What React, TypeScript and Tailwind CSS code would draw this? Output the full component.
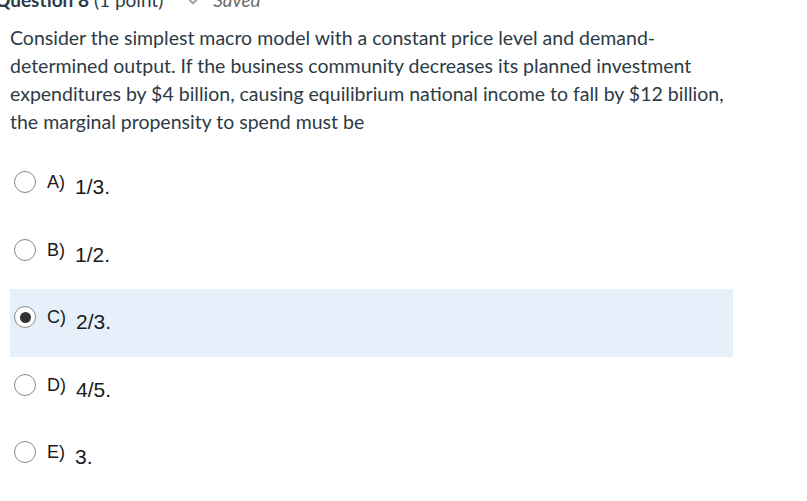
import { Check } from "lucide-react";

const options = [
  { key: "A)", text: "1/3.", selected: false },
  { key: "B)", text: "1/2.", selected: false },
  { key: "C)", text: "2/3.", selected: true },
  { key: "D)", text: "4/5.", selected: false },
  { key: "E)", text: "3.", selected: false },
];

export default function App() {
  return (
    <div className="w-[807px] h-[501px] overflow-hidden bg-white text-[#2d3b45] font-['Lato',sans-serif]">
      {/* Header, cut off by the viewport */}
      <div className="flex items-center h-[22px] -mt-[11px] -ml-[5px] text-[19px] leading-[22px]">
        <span className="font-bold">Question 8</span>
        <span className="ml-[5px]">(1 point)</span>
        <Check className="w-4 h-4 ml-[24px] text-[#a0a0a0]" strokeWidth={3} />
        <span className="ml-[10px] italic text-[#6b6b6b]">Saved</span>
      </div>

      {/* Question text */}
      <p className="mt-[13px] px-[10px] w-[752px] text-[19.5px] leading-[28px]">
        Consider the simplest macro model with a constant price level and demand-determined output. If the
        business community decreases its planned investment expenditures by $4 billion, causing equilibrium
        national income to fall by $12 billion, the marginal propensity to spend must be
      </p>

      {/* Options */}
      <div className="mt-[18px] w-[723px] ml-[10px] font-['Liberation_Sans',Arial,sans-serif] text-[#1a1a1a]">
        {options.map((o) => (
          <div
            key={o.key}
            className={`h-[67.5px] flex items-start pt-[17px] pl-[4px] ${o.selected ? "bg-[#e6f0fa]" : ""}`}
          >
            <div className="w-[22px] h-[22px] rounded-full border border-[#8a8a8a] bg-white flex items-center justify-center">
              {o.selected && <div className="w-[11px] h-[11px] rounded-full bg-[#333]" />}
            </div>
            <span className="ml-[11px] text-[18px] leading-[20px] mt-[1px]">{o.key}</span>
            <span className="ml-[10px] text-[21px] leading-[20px] mt-[6px]">{o.text}</span>
          </div>
        ))}
      </div>
    </div>
  );
}
